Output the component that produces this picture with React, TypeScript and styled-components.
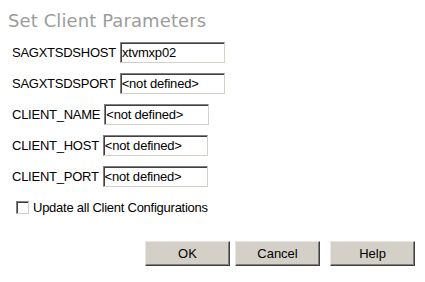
import React from "react";
import styled, { createGlobalStyle } from "styled-components";

const Global = createGlobalStyle`
  html, body { margin: 0; padding: 0; background: #ffffff; }
  body { font-family: "Liberation Sans", Arial, sans-serif; font-size: 13px; color: #000; }
`;

const Page = styled.div`
  width: 425px;
  height: 282px;
  box-sizing: border-box;
  padding: 10px 10px 0 8px;
  display: flex;
  flex-direction: column;
`;

const Title = styled.h1`
  margin: 0;
  font-family: "DejaVu Sans", Verdana, sans-serif;
  font-weight: normal;
  font-size: 18px;
  line-height: 21px;
  letter-spacing: 0.1px;
  color: #9c9c9c;
`;

const Form = styled.div`
  margin-top: 11px;
  padding-left: 4px;
  display: flex;
  flex-direction: column;
  gap: 10px;
`;

const Row = styled.div`
  display: flex;
  align-items: center;
  gap: 4px;
  height: 21px;
`;

const Label = styled.span`
  font-size: 13px;
  line-height: 15px;
  letter-spacing: -0.25px;
  white-space: nowrap;
`;

const Field = styled.input`
  box-sizing: border-box;
  width: 105px;
  height: 21px;
  margin: 0;
  padding: 0 2px 1px 1px;
  font-family: "Liberation Sans", Arial, sans-serif;
  font-size: 13px;
  letter-spacing: -0.2px;
  color: #000;
  background: #fff;
  border: 1px solid;
  border-color: #808080 #d4d0c8 #d4d0c8 #808080;
  box-shadow: inset 1px 1px 0 #404040;
  outline: none;
`;

const CheckRow = styled.label`
  margin-top: 14px;
  padding-left: 8px;
  display: flex;
  align-items: center;
  gap: 4px;
  height: 13px;
`;

const Box = styled.span`
  box-sizing: border-box;
  width: 13px;
  height: 13px;
  background: #fff;
  border: 1px solid;
  border-color: #808080 #d4d0c8 #d4d0c8 #808080;
  box-shadow: inset 1px 1px 0 #404040;
`;

const Buttons = styled.div`
  margin-top: 27px;
  display: flex;
  justify-content: flex-end;
`;

const Button = styled.button<{ $gap?: number }>`
  box-sizing: border-box;
  width: 85px;
  height: 25px;
  margin: 0 0 0 ${(p) => p.$gap ?? 0}px;
  padding: 0;
  font-family: "Liberation Sans", Arial, sans-serif;
  font-size: 13px;
  color: #000;
  background: #d4d0c8;
  border: 1px solid;
  border-color: #e8e6e0 #404040 #404040 #e8e6e0;
  box-shadow: inset -1px -1px 0 #808080;
`;

const fields: { name: string; value: string }[] = [
  { name: "SAGXTSDSHOST", value: "xtvmxp02" },
  { name: "SAGXTSDSPORT", value: "<not defined>" },
  { name: "CLIENT_NAME", value: "<not defined>" },
  { name: "CLIENT_HOST", value: "<not defined>" },
  { name: "CLIENT_PORT", value: "<not defined>" },
];

export default function App() {
  return (
    <>
      <Global />
      <Page>
        <Title>Set Client Parameters</Title>
        <Form>
          {fields.map((f) => (
            <Row key={f.name}>
              <Label>{f.name}</Label>
              <Field defaultValue={f.value} />
            </Row>
          ))}
        </Form>
        <CheckRow>
          <Box />
          <Label>Update all Client Configurations</Label>
        </CheckRow>
        <Buttons>
          <Button>OK</Button>
          <Button $gap={5}>Cancel</Button>
          <Button $gap={10}>Help</Button>
        </Buttons>
      </Page>
    </>
  );
}
